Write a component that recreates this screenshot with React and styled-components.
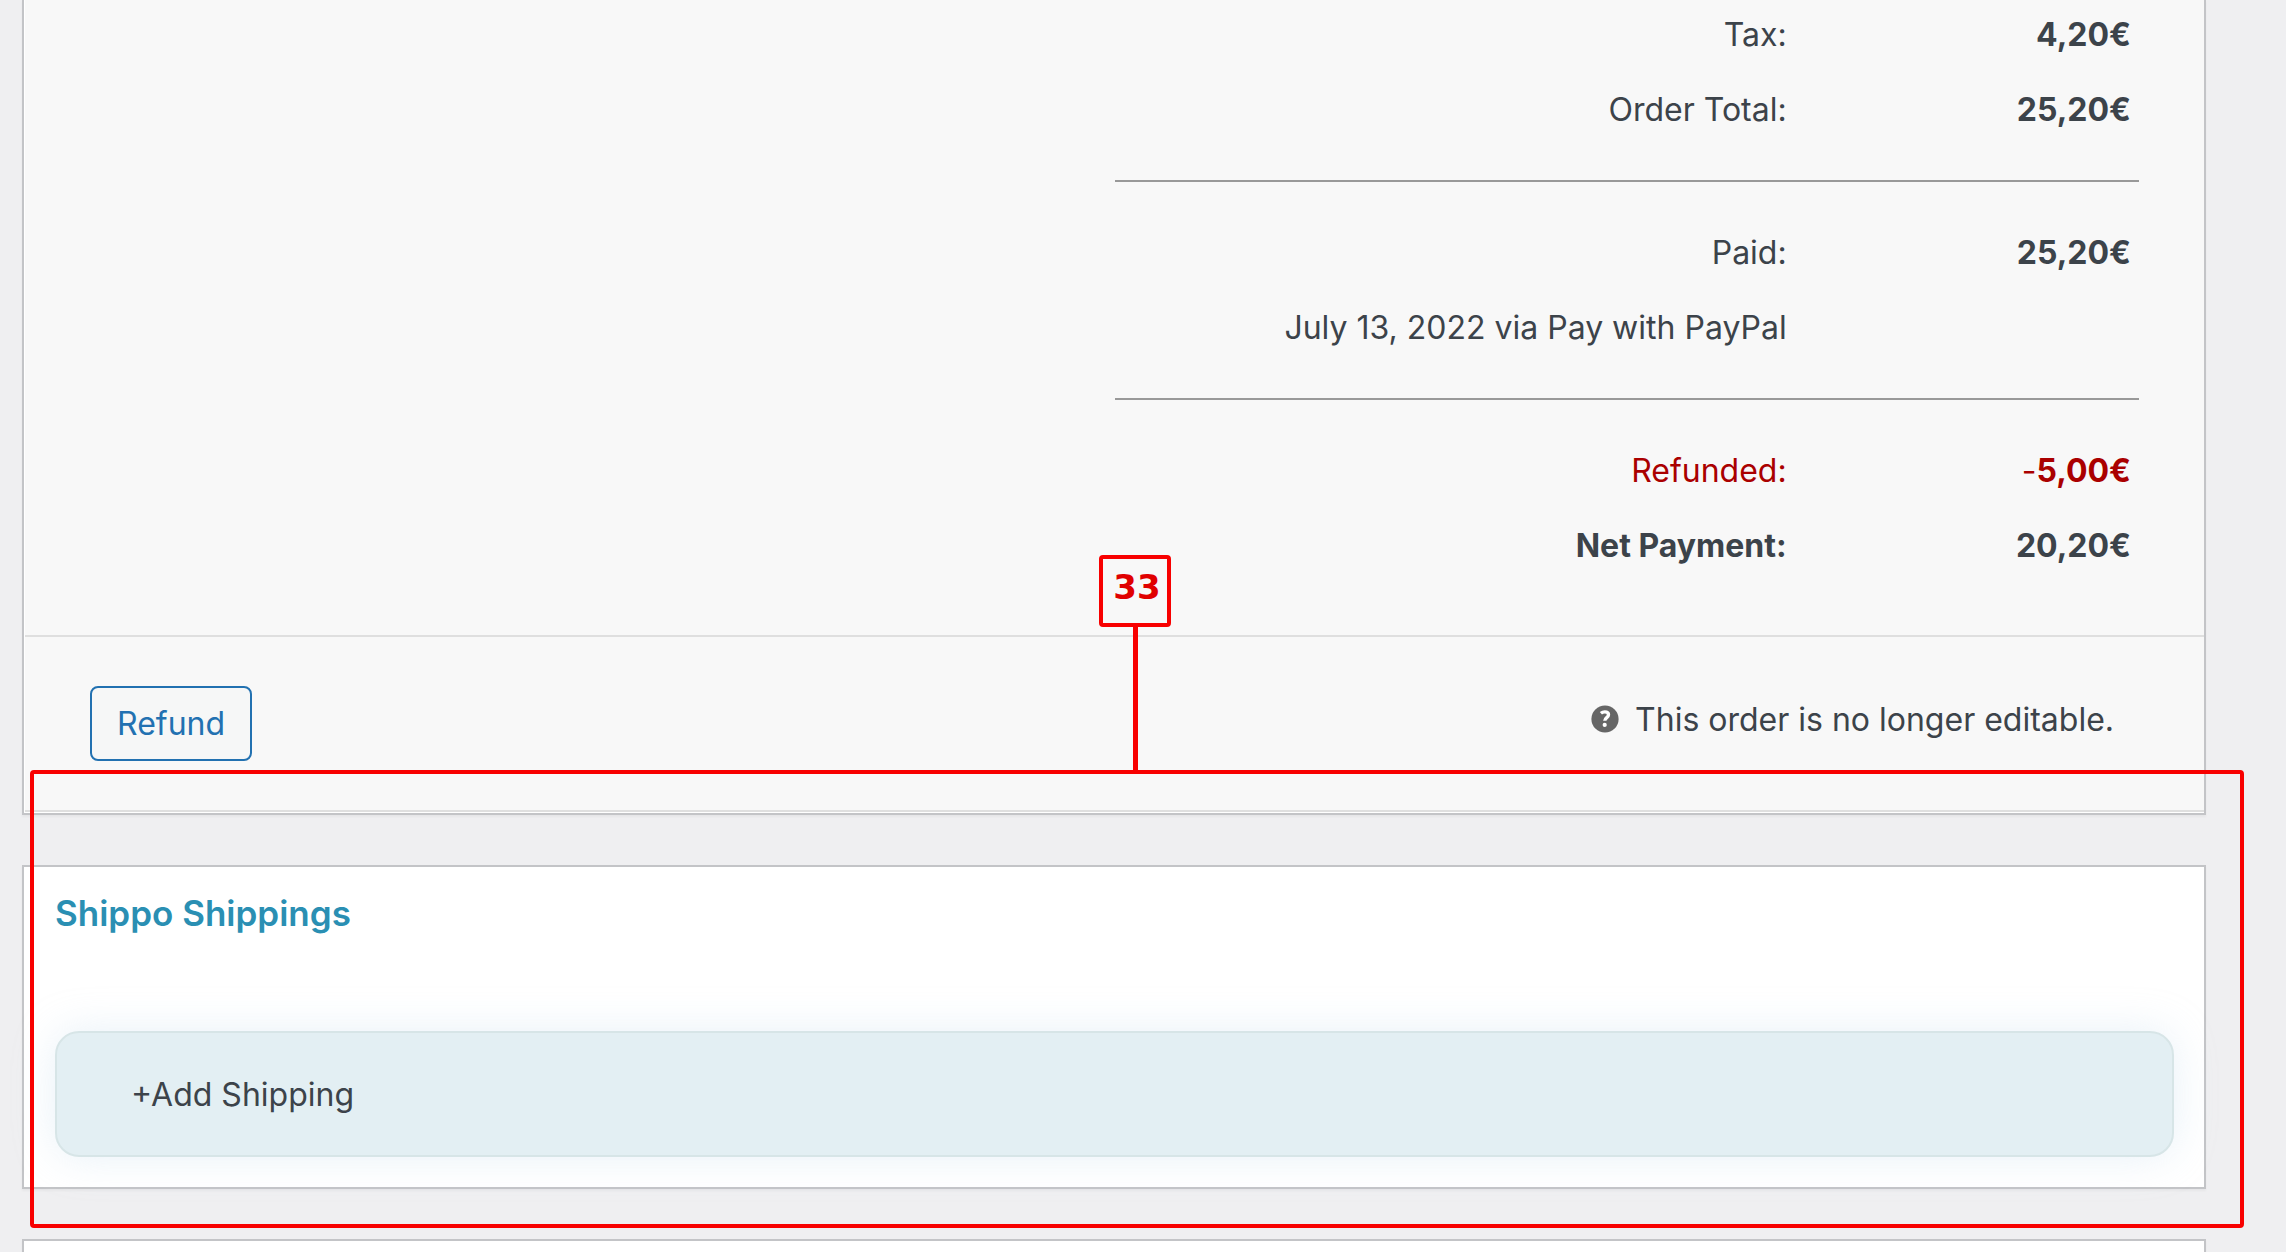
import React from "react";
import styled, { createGlobalStyle } from "styled-components";

const GlobalStyle = createGlobalStyle`
  * {
    box-sizing: border-box;
  }
  body {
    margin: 0;
    background-color: #efeff1;
    color: #3c434a;
    font-family: Inter, "Liberation Sans", sans-serif;
    font-size: 32px;
  }
`;

const Page = styled.main`
  min-height: 100vh;
  padding: 0 80px 0 22px;
  display: flex;
  flex-direction: column;
  overflow: hidden;
`;

const Panel = styled.section`
  background-color: white;
  border: 2px solid #c3c4c7;
  box-shadow: 0 2px 2px rgba(0, 0, 0, 0.04);
`;

const OrderPanel = styled(Panel)`
  border-top: none;
  padding: 0 0 1px 1px;
`;

const NextPanel = styled(Panel)`
  flex: 1;
  border-bottom: none;
  margin-top: 50px;
`;

const Block = styled.div`
  background-color: #f8f8f8;
  border-bottom: 2px solid #dfdfdf;
  padding: 0 65px 49px;
`;

const Totals = styled.table`
  width: 50%;
  margin-left: auto;
  border-collapse: collapse;
`;

const Group = styled.tbody`
  & + & {
    border-top: 2px solid #999;
  }
  &:not(:first-child)::before,
  &:not(:last-child)::after {
    content: "";
    display: table-row;
    height: 37px;
  }
  &:not(:last-child)::after {
    height: 31px;
  }
`;

const Label = styled.th`
  height: 75px;
  padding: 0 4px 7px 0;
  text-align: right;
  font-weight: ${(props) => (props.$strong ? 700 : 400)};
  color: ${(props) => (props.$refund ? "#a00" : "inherit")};
`;

const Amount = styled.td`
  width: 34%;
  padding: 0 8px 7px 0;
  text-align: right;
  color: ${(props) => (props.$refund ? "#a00" : "inherit")};
`;

const Price = styled.strong`
  font-weight: 700;
`;

const Actions = styled(Block)`
  padding-top: 49px;
  display: flex;
  justify-content: space-between;
`;

const RefundButton = styled.button`
  height: 75px;
  padding: 0 25px;
  border: 2px solid #2271b1;
  border-radius: 8px;
  background-color: #f6f7f7;
  color: #2271b1;
  font: inherit;
  cursor: pointer;
`;

const Note = styled.p`
  height: 66px;
  margin: 0 25px 0 0;
  display: flex;
  align-items: center;
  gap: 16px;
`;

const ShippoWrap = styled.div`
  position: relative;
  margin-top: 50px;
`;

const ShippoPanel = styled(Panel)`
  padding: 24px 30px 30px 31px;
`;

const Title = styled.h2`
  margin: 0 0 96px;
  font-size: 35px;
  line-height: 44px;
  font-weight: 600;
  color: #2a8fb3;
`;

const AddButton = styled.button`
  width: 100%;
  height: 126px;
  padding: 0 74px;
  border: 2px solid #d7e5e7;
  border-radius: 24px;
  background-color: #e3eff3;
  box-shadow: 0 0 40px rgba(190, 215, 235, 0.35);
  color: inherit;
  font: inherit;
  text-align: left;
  cursor: pointer;
`;

const Callout = styled.div`
  position: absolute;
  top: -95px;
  right: -38px;
  bottom: -39px;
  left: 8px;
  border: 4px solid #f80000;
  border-radius: 4px;
  pointer-events: none;
`;

const Marker = styled.div`
  position: absolute;
  right: 4px;
  bottom: 100%;
  left: 0;
  display: flex;
  flex-direction: column;
  align-items: center;
`;

const Badge = styled.span`
  width: 72px;
  height: 72px;
  padding: 0 0 8px 4px;
  display: flex;
  align-items: center;
  justify-content: center;
  border: 4px solid #f80000;
  border-radius: 4px;
  color: #e00000;
  font-family: "DejaVu Sans", sans-serif;
  font-size: 34px;
  font-weight: 700;
`;

const Stem = styled.span`
  width: 5px;
  height: 147px;
  background-color: #f80000;
`;

const HelpIcon = () => (
  <svg width="28" height="28" viewBox="0 0 28 28" aria-hidden="true">
    <circle cx="14" cy="14" r="13.6" fill="#666" />
    <path
      d="M9.900 8.300C11.100 7.300 12.400 6.900 13.800 6.900c2.300 0 3.700 1.100 3.700 2.900 0 2.900-3.700 2.800-3.700 6"
      fill="none"
      stroke="white"
      strokeWidth="3.4"
    />
    <circle cx="13.700" cy="19.900" r="2.100" fill="white" />
  </svg>
);

const App = () => {
  return (
    <Page>
      <GlobalStyle />
      <OrderPanel>
        <Block>
          <Totals>
            <Group>
              <tr>
                <Label scope="row">Tax:</Label>
                <Amount><Price>4,20€</Price></Amount>
              </tr>
              <tr>
                <Label scope="row">Order Total:</Label>
                <Amount><Price>25,20€</Price></Amount>
              </tr>
            </Group>
            <Group>
              <tr>
                <Label scope="row">Paid:</Label>
                <Amount><Price>25,20€</Price></Amount>
              </tr>
              <tr>
                <Label scope="row">July 13, 2022 via Pay with PayPal</Label>
                <Amount />
              </tr>
            </Group>
            <Group>
              <tr>
                <Label scope="row" $refund>Refunded:</Label>
                <Amount $refund>-<Price>5,00€</Price></Amount>
              </tr>
              <tr>
                <Label scope="row" $strong>Net Payment:</Label>
                <Amount><Price>20,20€</Price></Amount>
              </tr>
            </Group>
          </Totals>
        </Block>
        <Actions>
          <RefundButton type="button">Refund</RefundButton>
          <Note>
            <HelpIcon />
            This order is no longer editable.
          </Note>
        </Actions>
      </OrderPanel>
      <ShippoWrap>
        <ShippoPanel>
          <Title>Shippo Shippings</Title>
          <AddButton type="button">+Add Shipping</AddButton>
        </ShippoPanel>
        <Callout>
          <Marker>
            <Badge>33</Badge>
            <Stem />
          </Marker>
        </Callout>
      </ShippoWrap>
      <NextPanel />
    </Page>
  );
};

export default App;
